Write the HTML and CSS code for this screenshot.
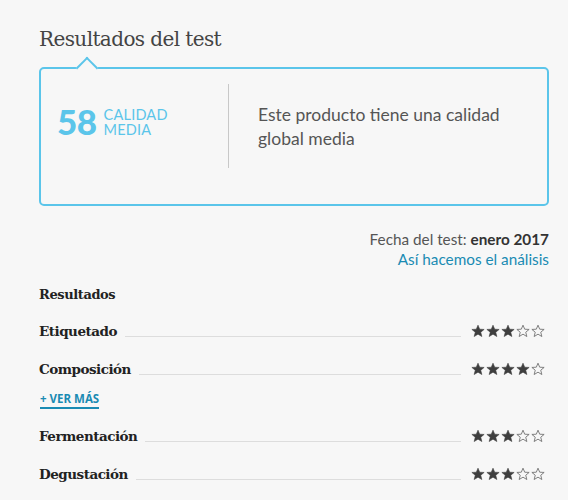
FILE: index.html
```html
<!DOCTYPE html>
<html lang="es">
<head>
<meta charset="utf-8">
<link rel="stylesheet" href="styles.css">
</head>
<body>
<svg class="defs" width="0" height="0" aria-hidden="true">
  <defs>
    <polygon id="star" points="12,2 14.9,8.9 22.5,9.3 16.7,14.1 18.6,21.5 12,17.4 5.4,21.5 7.3,14.1 1.5,9.3 9.1,8.9"/>
  </defs>
</svg>
<div class="page">
  <h2 class="title">Resultados del test</h2>
  <div class="card">
    <span class="notch"></span>
    <div class="score">
      <span class="num">58</span>
      <span class="label">CALIDAD<br>MEDIA</span>
    </div>
    <div class="divider"></div>
    <p class="desc">Este producto tiene una calidad global media</p>
  </div>
  <div class="meta">
    <div class="date">Fecha del test: <b>enero 2017</b></div>
    <a class="how" href="#">Así hacemos el análisis</a>
  </div>
  <div class="results">
    <div class="res-head">Resultados</div>
    <div class="row first"><span class="name">Etiquetado</span><span class="line"></span><span class="stars">
      <svg class="f" viewBox="0 0 24 24"><use href="#star"/></svg><svg class="f" viewBox="0 0 24 24"><use href="#star"/></svg><svg class="f" viewBox="0 0 24 24"><use href="#star"/></svg><svg class="o" viewBox="0 0 24 24"><use href="#star"/></svg><svg class="o" viewBox="0 0 24 24"><use href="#star"/></svg>
    </span></div>
    <div class="row"><span class="name">Composición</span><span class="line"></span><span class="stars">
      <svg class="f" viewBox="0 0 24 24"><use href="#star"/></svg><svg class="f" viewBox="0 0 24 24"><use href="#star"/></svg><svg class="f" viewBox="0 0 24 24"><use href="#star"/></svg><svg class="f" viewBox="0 0 24 24"><use href="#star"/></svg><svg class="o" viewBox="0 0 24 24"><use href="#star"/></svg>
    </span></div>
    <a class="more" href="#">+ VER MÁS</a>
    <div class="row"><span class="name">Fermentación</span><span class="line"></span><span class="stars">
      <svg class="f" viewBox="0 0 24 24"><use href="#star"/></svg><svg class="f" viewBox="0 0 24 24"><use href="#star"/></svg><svg class="f" viewBox="0 0 24 24"><use href="#star"/></svg><svg class="o" viewBox="0 0 24 24"><use href="#star"/></svg><svg class="o" viewBox="0 0 24 24"><use href="#star"/></svg>
    </span></div>
    <div class="row"><span class="name">Degustación</span><span class="line"></span><span class="stars">
      <svg class="f" viewBox="0 0 24 24"><use href="#star"/></svg><svg class="f" viewBox="0 0 24 24"><use href="#star"/></svg><svg class="f" viewBox="0 0 24 24"><use href="#star"/></svg><svg class="o" viewBox="0 0 24 24"><use href="#star"/></svg><svg class="o" viewBox="0 0 24 24"><use href="#star"/></svg>
    </span></div>
  </div>
</div>
</body>
</html>
```
FILE: styles.css
```css
html, body {
  margin: 0;
  padding: 0;
  background: #f7f7f7;
}
.defs {
  position: absolute;
  width: 0;
  height: 0;
}
.page {
  padding: 24px 19px 0 39px;
  font-family: Lato, "Open Sans", sans-serif;
  color: #444;
}
.title {
  margin: 0;
  font-family: "DejaVu Serif", serif;
  font-weight: normal;
  font-size: 20px;
  letter-spacing: -0.6px;
  line-height: 30px;
  color: #444;
}
.card {
  position: relative;
  margin-top: 13px;
  height: 135px;
  border: 2px solid #5bc5ea;
  border-radius: 5px;
  display: flex;
  align-items: flex-start;
  box-sizing: content-box;
}
.notch {
  position: absolute;
  top: -9px;
  left: 38px;
  width: 14px;
  height: 14px;
  background: #f7f7f7;
  border-top: 2px solid #5bc5ea;
  border-left: 2px solid #5bc5ea;
  transform: rotate(45deg);
}
.score {
  display: flex;
  align-items: center;
  padding-left: 16px;
  margin-top: 35px;
  width: 171px;
}
.num {
  font-size: 35px;
  font-weight: 900;
  color: #5bc5ea;
  line-height: 30px;
  letter-spacing: -0.5px;
}
.label {
  margin-left: 7px;
  font-size: 14.5px;
  line-height: 15px;
  color: #5bc5ea;
  letter-spacing: 0.2px;
  padding-top: 3px;
}
.divider {
  margin-top: 15px;
  width: 1px;
  height: 84px;
  background: #c8c8c8;
}
.desc {
  margin: 34px 0 0 29px;
  width: 270px;
  font-size: 17.5px;
  line-height: 24px;
  color: #555;
}
.meta {
  margin-top: 23px;
  text-align: right;
  font-size: 15.3px;
  line-height: 20px;
}
.date { color: #555; }
.date b { color: #333; }
.how {
  color: #1a8bb3;
  text-decoration: none;
}
.results {
  margin-top: 16px;
  font-family: "DejaVu Serif", serif;
}
.res-head {
  font-weight: bold;
  font-size: 13px;
  letter-spacing: -0.4px;
  line-height: 20px;
  color: #222;
}
.row {
  display: flex;
  align-items: center;
  margin-top: 18px;
  height: 20px;
}
.row.first { margin-top: 16px; }
.name {
  font-weight: bold;
  font-size: 13.5px;
  letter-spacing: -0.5px;
  line-height: 20px;
  color: #222;
}
.line {
  flex: 1;
  border-bottom: 1px solid #ddd;
  margin: 0 10px 0 8px;
  position: relative;
  top: 5px;
}
.stars {
  display: flex;
  margin-right: 3px;
}
.stars svg {
  width: 14px;
  height: 14px;
  margin-right: 1px;
}
.stars svg.f {
  fill: #3e3e3e;
  stroke: #3e3e3e;
  stroke-width: 1;
  stroke-linejoin: round;
}
.stars svg.o {
  fill: none;
  stroke: #777;
  stroke-width: 1.6;
  stroke-linejoin: round;
}
.more {
  display: inline-block;
  margin-top: 12px;
  font-family: "Open Sans", sans-serif;
  font-weight: bold;
  font-size: 11.5px;
  line-height: 16px;
  color: #1a8bb3;
  text-decoration: none;
  border-bottom: 2px solid #1a8bb3;
  margin-left: 1px;
}
.more + .row { margin-top: 17px; }
```
